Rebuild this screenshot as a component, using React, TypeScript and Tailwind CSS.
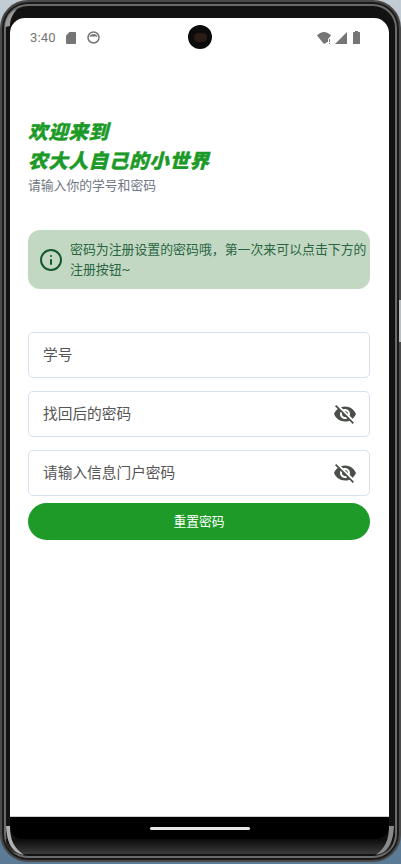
import { Info } from "lucide-react";

const cjk = "font-['Roboto','Noto_Sans_CJK_SC',sans-serif]";

const EyeOff = () => (
  <svg width="24" height="24" viewBox="0 0 24 24" fill="#4a4f4a" className="shrink-0">
    <path d="M12 7c2.76 0 5 2.24 5 5 0 .65-.13 1.26-.36 1.83l2.92 2.92c1.51-1.26 2.7-2.89 3.43-4.75-1.73-4.39-6-7.5-11-7.5-1.4 0-2.74.25-3.98.7l2.16 2.16C10.74 7.13 11.35 7 12 7zM2 4.27l2.28 2.28.46.46C3.08 8.3 1.78 10.02 1 12c1.73 4.39 6 7.5 11 7.5 1.55 0 3.03-.3 4.38-.84l.42.42L19.73 22 21 20.73 3.27 3 2 4.27zM7.53 9.8l1.55 1.55c-.05.21-.08.43-.08.65 0 1.66 1.34 3 3 3 .22 0 .44-.03.65-.08l1.55 1.55c-.67.33-1.41.53-2.2.53-2.76 0-5-2.24-5-5 0-.79.2-1.53.53-2.2zm4.31-.78l3.15 3.15.02-.16c0-1.66-1.34-3-3-3l-.17.01z" />
  </svg>
);

const Field = ({ label, eye }: { label: string; eye?: boolean }) => (
  <div className="flex h-[46px] items-center justify-between rounded-[5px] border-[1.5px] border-[#d8e2ee] pl-[14px] pr-[12px]">
    <span className="text-[14.7px] text-[#555555]">{label}</span>
    {eye && <EyeOff />}
  </div>
);

const StatusBar = () => (
  <div className="relative flex h-[38px] items-center justify-between pl-[20px] pr-[29px] pt-[1px] text-[#757575]">
    <div className="flex items-center gap-[10px]">
      <span className="font-['Roboto',sans-serif] text-[13px] tracking-[0.2px]">3:40</span>
      <svg width="10" height="12" viewBox="0 0 10 12" fill="#757575">
        <path d="M3.5 0H9a1 1 0 0 1 1 1v10a1 1 0 0 1-1 1H1a1 1 0 0 1-1-1V3.5z" />
      </svg>
      <svg width="13" height="13" viewBox="0 0 13 13" className="ml-[1px]">
        <circle cx="6.5" cy="6.5" r="5.5" fill="none" stroke="#757575" strokeWidth="1.5" />
        <path d="M2.5 6C3 3.8 4.5 3 6.5 3s3.500.8 4 3c-1.200-.6-2-.6-4-.6s-2.800 0-4 .6z" fill="#757575" />
      </svg>
    </div>
    <div className="absolute left-[178px] top-[7px] flex h-[24px] w-[24px] items-center justify-center rounded-full bg-[#0b0b0b]">
      <div className="h-[9px] w-[13px] rounded-full bg-[#2a1c14]" />
    </div>
    <div className="flex items-center gap-[3px]">
      <svg width="15" height="12" viewBox="0 0 15 12" fill="#757575">
        <path d="M0 3.500C2 1.300 4.500 0 7 0s5 1.300 7 3.500L11 7v2.800L7 12z" />
        <rect x="12" y="7" width="1" height="3" />
        <rect x="12" y="11" width="1" height="1" />
      </svg>
      <svg width="12" height="12" viewBox="0 0 12 12" fill="#757575">
        <path d="M12 0v12H0z" />
      </svg>
      <svg width="7" height="13" viewBox="0 0 7 13" fill="#757575" className="ml-[3px]">
        <path d="M2 0h3v1h1.500a.5.5 0 0 1 .5.500V12.500a.5.5 0 0 1-.5.500H.5a.5.5 0 0 1-.5-.500V1.500A.5.5 0 0 1 .5 1H2z" />
      </svg>
    </div>
  </div>
);

// light glints on the device's rounded corners
const CornerGlints = () => (
  <svg width="401" height="864" viewBox="0 0 401 864" className="pointer-events-none absolute left-[-2px] top-[-2px]">
    <path d="M17 9C10 12 6 17 5 27L10 26C10 20 12 15 17 9z" fill="#9a9a9a" />
    <path d="M10 826C10 840 14 848 24 855C14 853 7 846 6 826z" fill="#b0b0b0" />
    <path d="M389 826C389 840 385 848 376 855C386 853 393 846 394 826z" fill="#8a8a8a" />
  </svg>
);

export default function App() {
  return (
    <div className={`${cjk} relative h-[864px] w-[401px] overflow-hidden bg-gradient-to-b from-[#c3ccd4] via-[#8a9aa8] to-[#5a7a95]`}>
      <div className="relative flex h-[862px] flex-col overflow-hidden rounded-[28px] border-2 border-[#4a4a4a] bg-[#121212] pl-[8px] pr-[10px] pt-[16px] shadow-[inset_0_0_0_2px_#1a1a1a,inset_0_0_0_4px_#6a6a6a]">
        <div className="flex h-[799px] shrink-0 flex-col rounded-t-[15px] border-b border-[#cfcfcf] bg-white">
          <StatusBar />
          <div className="flex flex-col pl-[18px] pr-[19px]">
            <h1 className="mt-[62px] text-[19.500px] font-black italic leading-[29px] tracking-[0.700px] text-[#1c9a28] [-webkit-text-stroke:0.4px_#1c9a28]">
              欢迎来到
              <br />
              农大人自己的小世界
            </h1>
            <p className="mt-[1px] text-[12.8px] leading-[18px] text-[#6f7683]">请输入你的学号和密码</p>
            <div className="mt-[35px] flex h-[59px] items-center gap-[7px] rounded-[12px] bg-[#c2d8c2] pl-[11px]">
              <Info size={24} strokeWidth={2} color="#17572f" className="shrink-0" />
              <p className="text-[12.9px] leading-[19.500px] text-[#2a6644]">
                密码为注册设置的密码哦，第一次来可以点击下方的注册按钮~
              </p>
            </div>
            <div className="mt-[43px] flex flex-col gap-[13px]">
              <Field label="学号" />
              <Field label="找回后的密码" eye />
              <Field label="请输入信息门户密码" eye />
            </div>
            <button className="mt-[7px] h-[37px] rounded-full bg-[#1e9a28] text-[12.8px] text-white">重置密码</button>
          </div>
        </div>
        <div className="flex h-[22px] shrink-0 items-center justify-center rounded-b-[12px] bg-black pt-[1px]">
          <div className="h-[3px] w-[100px] rounded-full bg-[#e6e6e6]" />
        </div>
        <div className="mx-[-4px] h-[15px] shrink-0 rounded-b-[14px] bg-gradient-to-b from-[#0c0c0c] to-[#3c3c3c]" />
        <CornerGlints />
      </div>
      <div className="absolute right-0 top-[300px] h-[42px] w-[2px] bg-[#b9bfc0]" />
    </div>
  );
}
